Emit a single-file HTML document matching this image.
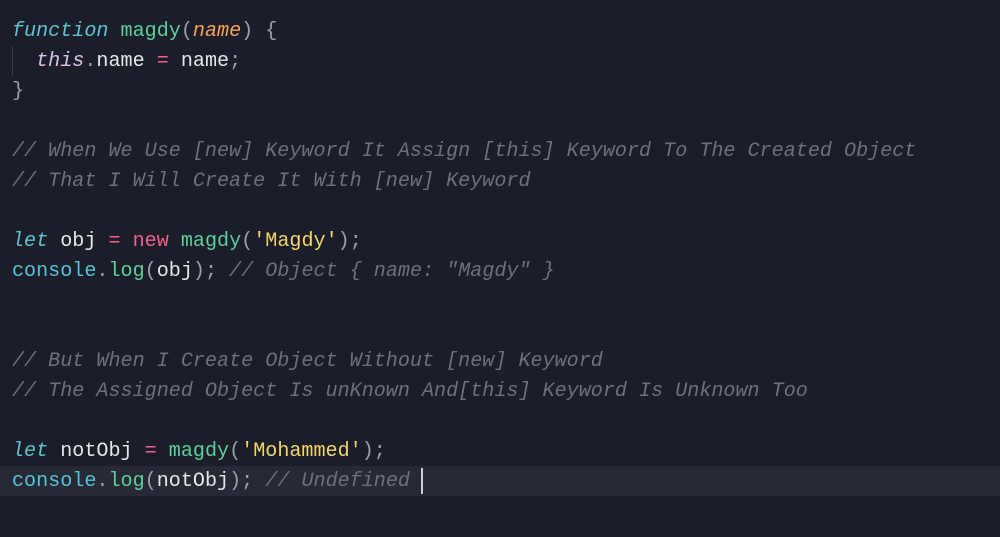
<!DOCTYPE html>
<html><head><style>
html,body{margin:0;padding:0;background:#1b1e28;width:1000px;height:537px;overflow:hidden}
.code{position:absolute;left:12px;top:17px;font-family:"Liberation Mono",monospace;font-size:20.1px;line-height:30px;color:#e4e6ea;white-space:pre}
.hl{position:absolute;left:0;top:466px;width:1000px;height:30px;background:#272a34}
.k{color:#5ec4d4;font-style:italic}
.f{color:#5ccf9c}
.p{color:#f5a35c;font-style:italic}
.t{color:#d9c2ea;font-style:italic}
.o{color:#f2608d}
.g{color:#9ba0aa}
.c{color:#6a7180;font-style:italic}
.s{color:#f1d56e}
.cn{color:#55c3d8}
.guide{position:absolute;left:12px;top:46px;width:1px;height:30px;background:#3a3e48}
.cur{position:absolute;left:421px;top:468px;width:2px;height:26px;background:#d0d0d0}
</style></head><body>
<div class="hl"></div>
<div class="guide"></div>
<div class="code"><span class="k">function</span> <span class="f">magdy</span><span class="g">(</span><span class="p">name</span><span class="g">) {</span>
  <span class="t">this</span><span class="g">.</span>name <span class="o">=</span> name<span class="g">;</span>
<span class="g">}</span>

<span class="c">// When We Use [new] Keyword It Assign [this] Keyword To The Created Object</span>
<span class="c">// That I Will Create It With [new] Keyword</span>

<span class="k">let</span> obj <span class="o">=</span> <span class="o">new</span> <span class="f">magdy</span><span class="g">(</span><span class="s">'Magdy'</span><span class="g">);</span>
<span class="cn">console</span><span class="g">.</span><span class="f">log</span><span class="g">(</span>obj<span class="g">);</span> <span class="c">// Object { name: "Magdy" }</span>


<span class="c">// But When I Create Object Without [new] Keyword</span>
<span class="c">// The Assigned Object Is unKnown And[this] Keyword Is Unknown Too</span>

<span class="k">let</span> notObj <span class="o">=</span> <span class="f">magdy</span><span class="g">(</span><span class="s">'Mohammed'</span><span class="g">);</span>
<span class="cn">console</span><span class="g">.</span><span class="f">log</span><span class="g">(</span>notObj<span class="g">);</span> <span class="c">// Undefined</span></div>
<div class="cur"></div>
</body></html>
